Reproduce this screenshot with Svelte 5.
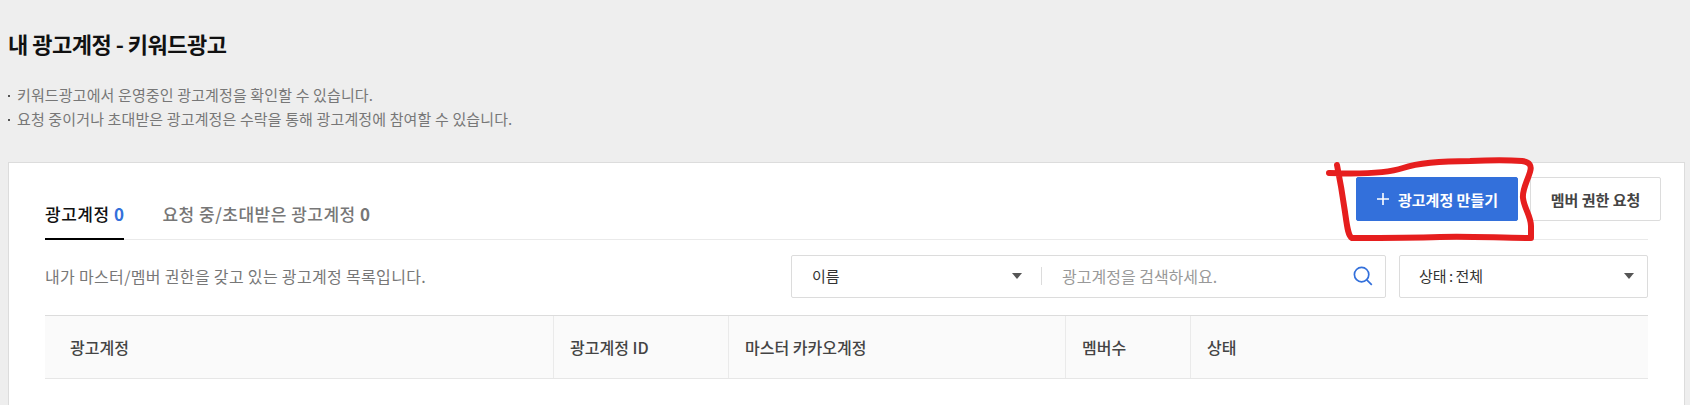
<script lang="ts">
	type Column = { label: string; width: string };

	const notices = [
		'키워드광고에서 운영중인 광고계정을 확인할 수 있습니다.',
		'요청 중이거나 초대받은 광고계정은 수락을 통해 광고계정에 참여할 수 있습니다.'
	];

	const columns: Column[] = [
		{ label: '광고계정', width: '508px' },
		{ label: '광고계정 ID', width: '175px' },
		{ label: '마스터 카카오계정', width: '337px' },
		{ label: '멤버수', width: '125px' },
		{ label: '상태', width: '1fr' }
	];

	const gridColumns = columns.map((column) => column.width).join(' ');
</script>

<div class="page">
	<header class="page-header">
		<h1>내 광고계정 - 키워드광고</h1>
		<ul class="notices">
			{#each notices as notice}
				<li>{notice}</li>
			{/each}
		</ul>
	</header>

	<section class="card">
		<div class="tabs-row">
			<nav class="tabs">
				<button class="tab active" type="button">광고계정 <em>0</em></button>
				<button class="tab" type="button">요청 중/초대받은 광고계정 <em>0</em></button>
			</nav>
			<div class="actions">
				<button class="btn primary" type="button">
					<svg width="14" height="14" viewBox="0 0 14 14" aria-hidden="true">
						<path d="M7 1v12M1 7h12" stroke="#fff" stroke-width="1.6" fill="none" />
					</svg>
					광고계정 만들기
				</button>
				<button class="btn" type="button">멤버 권한 요청</button>
			</div>
		</div>

		<div class="filter-row">
			<p class="description">내가 마스터/멤버 권한을 갖고 있는 광고계정 목록입니다.</p>
			<div class="search">
				<div class="search-type">
					<span>이름</span>
					<i class="caret"></i>
				</div>
				<span class="search-divider"></span>
				<span class="placeholder">광고계정을 검색하세요.</span>
				<svg class="search-icon" width="20" height="20" viewBox="0 0 20 20" aria-hidden="true">
					<circle cx="8.6" cy="8.6" r="7.2" fill="none" stroke="#3370db" stroke-width="1.7" />
					<path d="M13.8 13.8l5 5" fill="none" stroke="#3370db" stroke-width="1.7" />
				</svg>
			</div>
			<div class="status">
				<span>상태 : 전체</span>
				<i class="caret"></i>
			</div>
		</div>

		<div class="table-head" style="grid-template-columns: {gridColumns}">
			{#each columns as column}
				<div class="cell">{column.label}</div>
			{/each}
		</div>
	</section>

	<svg class="scribble" width="230" height="90" viewBox="1320 156 230 90" aria-hidden="true">
		<path
			d="M1329 173 C1355 174 1385 174 1403 168 C1418 163 1440 161 1470 161 C1490 160 1510 160 1522 161 C1530 162 1532 166 1530 172 C1527 182 1522 190 1523 198 C1524 208 1531 216 1531 226 C1531 231 1531 235 1531 238 C1500 238 1470 236 1440 237 C1410 238 1375 238 1352 238 C1348 236 1347 226 1345 212 C1343 198 1340 180 1337 165"
			fill="none"
			stroke="#e61e1e"
			stroke-width="6"
			stroke-linecap="round"
			stroke-linejoin="round"
		/>
	</svg>
</div>

<style>
	:global(body) {
		margin: 0;
		background: #eeeeee;
	}

	.page {
		position: relative;
		height: 405px;
		overflow: hidden;
		padding: 27px 5px 0 8px;
		box-sizing: border-box;
		background: #eeeeee;
		font-family: 'Noto Sans CJK KR', 'Noto Sans', sans-serif;
		color: #333;
	}

	.page-header {
		height: 135px;
	}

	h1 {
		margin: 0;
		font-size: 22px;
		line-height: 32px;
		font-weight: 700;
		letter-spacing: -0.5px;
		color: #111;
	}

	.notices {
		list-style: none;
		margin: 24px 0 0;
		padding: 0;
		font-size: 15px;
		line-height: 24px;
		letter-spacing: 0.13px;
		color: #777;
	}

	.notices li {
		position: relative;
		padding-left: 9px;
	}

	.notices li::before {
		content: '';
		position: absolute;
		left: 0;
		top: 12px;
		width: 2px;
		height: 2px;
		background: #555;
	}

	.card {
		height: 260px;
		padding: 14px 36px 0 36px;
		box-sizing: border-box;
		background: #fff;
		border: 1px solid #dcdcdc;
		border-bottom: 0;
	}

	.tabs-row {
		position: relative;
		height: 62px;
		border-bottom: 1px solid #eaeaea;
	}

	.tabs {
		display: flex;
		gap: 38px;
		height: 62px;
		align-items: flex-end;
	}

	.tab {
		height: 40px;
		padding: 0 0 10px;
		border: 0;
		border-bottom: 2px solid transparent;
		margin-bottom: -1px;
		background: none;
		font: inherit;
		font-size: 17px;
		font-weight: 500;
		line-height: 24px;
		letter-spacing: 0.5px;
		color: #777;
		cursor: pointer;
	}

	.tab em {
		font-style: normal;
		font-weight: 700;
	}

	.tab.active {
		color: #111;
		border-bottom-color: #000;
	}

	.tab.active em {
		color: #3370db;
	}

	.actions {
		position: absolute;
		top: 0;
		right: -13px;
		display: flex;
		gap: 12px;
	}

	.btn {
		display: inline-flex;
		align-items: center;
		justify-content: center;
		gap: 8px;
		width: 131px;
		height: 44px;
		padding: 0;
		box-sizing: border-box;
		font: inherit;
		font-size: 15px;
		font-weight: 700;
		color: #444;
		background: #fff;
		border: 1px solid #dcdcdc;
		border-radius: 2px;
		cursor: pointer;
	}

	.btn.primary {
		width: 162px;
		color: #fff;
		background: #3370db;
		border-color: #3370db;
	}

	.filter-row {
		display: flex;
		align-items: center;
		margin-top: 15px;
		height: 43px;
	}

	.description {
		margin: 0 0 2px;
		flex: 1;
		font-size: 16px;
		letter-spacing: 0.33px;
		color: #777;
	}

	.search,
	.status {
		display: flex;
		align-items: center;
		height: 43px;
		box-sizing: border-box;
		background: #fff;
		border: 1px solid #dcdcdc;
		border-radius: 2px;
		font-size: 15px;
		padding-bottom: 2px;
	}

	.search {
		width: 595px;
		padding-left: 20px;
		padding-right: 12px;
	}

	.search-type {
		display: flex;
		align-items: center;
		justify-content: space-between;
		width: 210px;
	}

	.search-divider {
		width: 1px;
		height: 18px;
		margin-left: 19px;
		background: #dcdcdc;
	}

	.placeholder {
		flex: 1;
		margin-left: 20px;
		font-size: 16px;
		color: #999;
	}

	.status {
		justify-content: space-between;
		width: 249px;
		margin-left: 13px;
		padding-left: 19px;
		padding-right: 13px;
		word-spacing: -1px;
	}

	.caret {
		width: 0;
		height: 0;
		border-left: 5px solid transparent;
		border-right: 5px solid transparent;
		border-top: 6px solid #555;
	}

	.table-head {
		display: grid;
		height: 64px;
		margin-top: 17px;
		box-sizing: border-box;
		background: #fafafa;
		border-top: 1px solid #dcdcdc;
		border-bottom: 1px solid #e6e6e6;
	}

	.cell {
		display: flex;
		align-items: center;
		padding-left: 16px;
		font-size: 16px;
		font-weight: 500;
		color: #444;
		border-left: 1px solid #eaeaea;
	}

	.cell:first-child {
		padding-left: 25px;
		border-left: 0;
	}

	.scribble {
		position: absolute;
		left: 1320px;
		top: 156px;
		pointer-events: none;
	}
</style>
